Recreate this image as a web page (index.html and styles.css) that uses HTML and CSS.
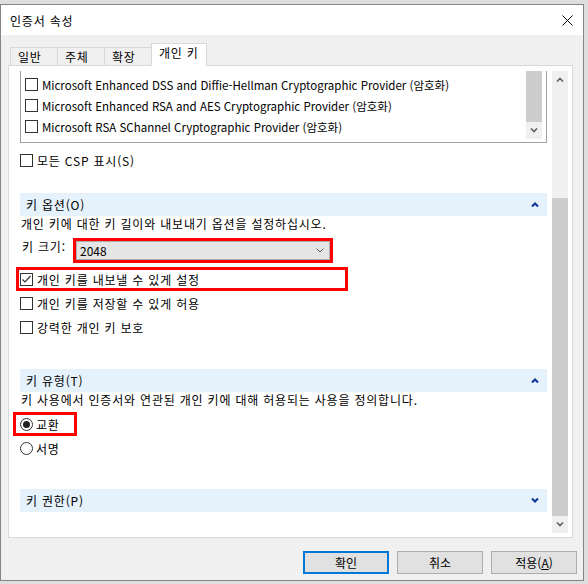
FILE: index.html
```html
<!DOCTYPE html>
<html lang="ko">
<head>
    <meta charset="UTF-8">
    <title>인증서 속성</title>
    <link rel="stylesheet" href="styles.css">
</head>
<body>

    <div class="window">
        <div class="titlebar">
            <span>인증서 속성</span>
            <svg class="close" width="11" height="11" viewBox="0 0 11 11">
                <path d="M0.5 0.5L10.5 10.5M10.5 0.5L0.5 10.5" stroke="#000" stroke-width="1" fill="none"/>
            </svg>
        </div>

        <div class="tabs">
            <div class="tab">일반</div>
            <div class="tab">주체</div>
            <div class="tab">확장</div>
            <div class="tab active">개인 키</div>
        </div>

        <div class="panel">
            <div class="viewport">
                <div class="listbox">
                    <div class="list-items">
                        <div class="item"><span class="box"></span>Microsoft Enhanced DSS and Diffie-Hellman Cryptographic Provider (암호화)</div>
                        <div class="item"><span class="box"></span>Microsoft Enhanced RSA and AES Cryptographic Provider (암호화)</div>
                        <div class="item"><span class="box"></span>Microsoft RSA SChannel Cryptographic Provider (암호화)</div>
                    </div>
                    <div class="mini-scroll">
                        <div class="thumb"></div>
                        <div class="arrow">
                            <svg width="8" height="5" viewBox="0 0 8 5"><path d="M1 0.5L4 3.5L7 0.5" stroke="#606060" stroke-width="1.6" fill="none"/></svg>
                        </div>
                    </div>
                </div>

                <div class="check-row show-all"><span class="box"></span>모든 CSP 표시(S)</div>

                <div class="section first">
                    <span>키 옵션(O)</span>
                    <svg width="8" height="5" viewBox="0 0 8 5"><path d="M1 4.5L4 1.5L7 4.5" stroke="#0a3796" stroke-width="2" fill="none"/></svg>
                </div>
                <p class="desc">개인 키에 대한 키 길이와 내보내기 옵션을 설정하십시오.</p>

                <div class="size-row">
                    <span class="size-label">키 크기:</span>
                    <div class="combo">
                        <span>2048</span>
                        <svg width="8" height="5" viewBox="0 0 8 5"><path d="M0.5 0.5L4 4L7.5 0.5" stroke="#555" stroke-width="1" fill="none"/></svg>
                    </div>
                </div>

                <div class="check-row marked-check">
                    <span class="box">
                        <svg width="11" height="11" viewBox="0 0 11 11"><path d="M1.5 5.5L4 8L9.5 2" stroke="#333" stroke-width="1.2" fill="none"/></svg>
                    </span>개인 키를 내보낼 수 있게 설정
                </div>
                <div class="check-row"><span class="box"></span>개인 키를 저장할 수 있게 허용</div>
                <div class="check-row"><span class="box"></span>강력한 개인 키 보호</div>

                <div class="section second">
                    <span>키 유형(T)</span>
                    <svg width="8" height="5" viewBox="0 0 8 5"><path d="M1 4.5L4 1.5L7 4.5" stroke="#0a3796" stroke-width="2" fill="none"/></svg>
                </div>
                <p class="desc">키 사용에서 인증서와 연관된 개인 키에 대해 허용되는 사용을 정의합니다.</p>

                <div class="radios">
                    <div class="check-row marked-radio"><span class="radio on"></span>교환</div>
                    <div class="check-row"><span class="radio"></span>서명</div>
                </div>

                <div class="section third">
                    <span>키 권한(P)</span>
                    <svg width="8" height="5" viewBox="0 0 8 5"><path d="M1 0.5L4 3.5L7 0.5" stroke="#0a3796" stroke-width="2" fill="none"/></svg>
                </div>
            </div>

            <div class="scrollbar">
                <div class="arrow">
                    <svg width="8" height="5" viewBox="0 0 8 5"><path d="M1 4.5L4 1.5L7 4.5" stroke="#606060" stroke-width="1.6" fill="none"/></svg>
                </div>
                <div class="track"><div class="thumb"></div></div>
                <div class="arrow">
                    <svg width="8" height="5" viewBox="0 0 8 5"><path d="M1 0.5L4 3.5L7 0.5" stroke="#606060" stroke-width="1.6" fill="none"/></svg>
                </div>
            </div>
        </div>

        <div class="buttons">
            <button class="default">확인</button>
            <button>취소</button>
            <button>적용(<u>A</u>)</button>
        </div>
    </div>

</body>
</html>
```

FILE: styles.css
```css
* {
    box-sizing: border-box;
}

body {
    margin: 0;
    background-color: #dedede;
    font-family: "Noto Sans CJK KR", "Noto Sans", sans-serif;
    font-size: 12px;
    letter-spacing: 0.8px;
    color: #000;
}

.window {
    width: 584px;
    height: 577px;
    margin-top: 4px;
    border: 1px solid #858585;
    background-color: #f0f0f0;
}

.titlebar {
    display: flex;
    align-items: center;
    justify-content: space-between;
    height: 30px;
    padding: 0 10px 0 9px;
    background: white;
}

/* tabs */

.tabs {
    display: flex;
    align-items: flex-end;
    height: 22px;
    margin-top: 8px;
    padding-left: 9px;
}

.tab {
    width: 48px;
    height: 18px;
    padding-left: 7px;
    border: 1px solid #d9d9d9;
    border-bottom: none;
    line-height: 17px;
}

.tab + .tab {
    margin-left: -1px;
}

.tab.active {
    position: relative;
    z-index: 1;
    width: 56px;
    height: 23px;
    margin-bottom: -1px;
    background: white;
    line-height: 18px;
}

/* tab page */

.panel {
    display: flex;
    width: 565px;
    height: 473px;
    margin-left: 7px;
    padding: 5px 4px 4px 0;
    border: 1px solid #d9d9d9;
    background: white;
}

.viewport {
    flex: 1;
    overflow: hidden;
    padding: 0 5px 0 11px;
}

.listbox {
    display: flex;
    border: 1px solid #a0a0a0;
    border-top: none;
}

.list-items {
    flex: 1;
    padding: 3px 0 5px 4px;
}

.item {
    display: flex;
    align-items: center;
    height: 21px;
    font-size: 11.5px;
    letter-spacing: 0;
    white-space: nowrap;
}

.mini-scroll {
    display: flex;
    flex-direction: column;
    width: 16px;
    margin: 0 4px 3px 0;
}

.mini-scroll .thumb {
    flex: 1;
    background: #cdcdcd;
}

.arrow {
    display: flex;
    align-items: center;
    justify-content: center;
    height: 17px;
    background: #f0f0f0;
}

.box {
    display: flex;
    align-items: center;
    justify-content: center;
    flex-shrink: 0;
    width: 13px;
    height: 13px;
    margin-right: 4px;
    border: 1px solid #333;
}

.check-row {
    display: flex;
    align-items: center;
    height: 24px;
    white-space: nowrap;
}

.show-all {
    height: 20px;
    margin-top: 7px;
}

.section {
    display: flex;
    align-items: center;
    justify-content: space-between;
    height: 23px;
    padding: 0 8px 0 6px;
    background: #e5f1fb;
}

.section.first {
    margin-top: 23px;
}

.section.second {
    margin-top: 30px;
}

.section.third {
    margin-top: 29px;
}

.desc {
    margin: 0;
    padding-left: 1px;
    line-height: 16px;
}

.size-row {
    display: flex;
    align-items: flex-start;
    margin: 9px 0 7px;
}

.size-label {
    width: 56px;
    padding-left: 2px;
    line-height: 12px;
}

.combo {
    display: flex;
    align-items: center;
    justify-content: space-between;
    width: 254px;
    height: 19px;
    padding: 0 5px 0 3px;
    border: 1px solid #adadad;
    background: #e5e5e5;
    letter-spacing: 0;
    outline: 3px solid red;
}

.marked-check {
    width: 332px;
    margin-left: -4px;
    padding-left: 4px;
    outline: 3px solid red;
    outline-offset: -3px;
}

.radios {
    margin-top: 4px;
}

.radio {
    display: flex;
    align-items: center;
    justify-content: center;
    width: 13px;
    height: 13px;
    margin-right: 3px;
    border: 1px solid #333;
    border-radius: 50%;
}

.radio.on::after {
    content: "";
    width: 7px;
    height: 7px;
    border-radius: 50%;
    background: #222;
}

.marked-radio {
    width: 64px;
    margin-left: -7px;
    padding-left: 7px;
    outline: 3px solid red;
    outline-offset: -3px;
}

/* page scrollbar */

.scrollbar {
    display: flex;
    flex-direction: column;
    width: 16px;
    background: #f0f0f0;
}

.track {
    display: flex;
    flex: 1;
    flex-direction: column;
    padding-top: 110px;
}

.track .thumb {
    flex: 1;
    background: #cdcdcd;
}

/* dialog buttons */

.buttons {
    display: flex;
    justify-content: flex-end;
    gap: 8px;
    margin-top: 13px;
    padding-right: 6px;
}

button {
    width: 86px;
    height: 23px;
    padding: 0;
    border: 1px solid #adadad;
    background: #e1e1e1;
    font: inherit;
    color: #000;
}

button.default {
    border: 2px solid #0078d7;
}
```
